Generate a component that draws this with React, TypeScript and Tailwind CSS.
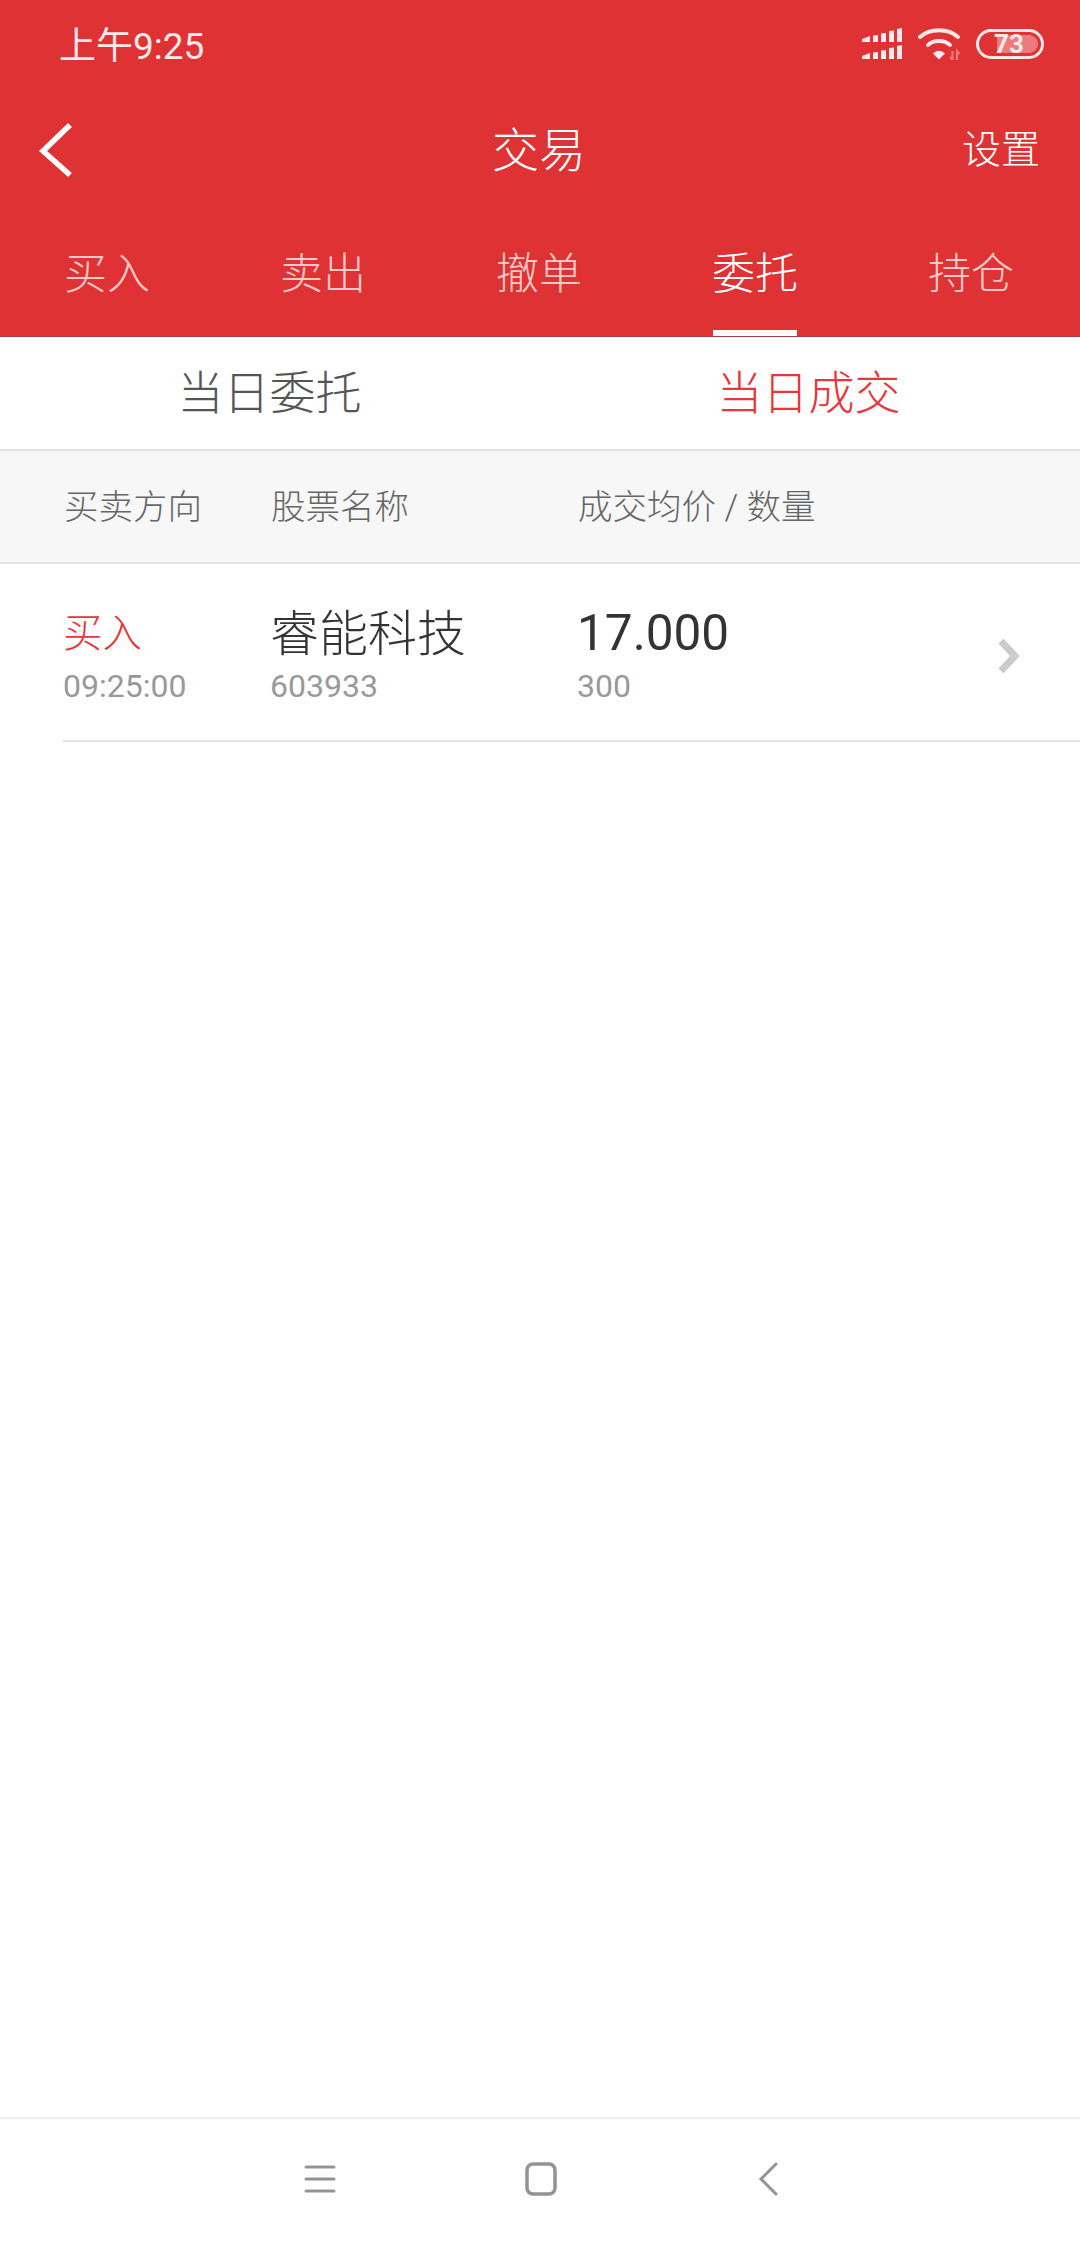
const font = "font-['Roboto','Noto_Sans_CJK_SC',sans-serif]";

const tabs = ["买入", "卖出", "撤单", "委托", "持仓"];

function SignalBars() {
  const row = "M0 11l8-3v6H0zM11 7.500l5-.5v7h-5zM19 5.500l5-.5v9h-5zM27 3l5-.5V14h-5zM35 1l5-1v14h-5z";
  return (
    <svg width="40" height="32" viewBox="0 0 40 32" fill="#fde9e9">
      <path d={row} />
      <path d={row} transform="translate(0 17)" />
    </svg>
  );
}

function WifiIcon() {
  return (
    <svg width="42" height="32" viewBox="0 0 42 32" fill="none">
      <g stroke="#fde9e9" strokeWidth="4" strokeLinecap="round">
        <path d="M2 9C12 0 30 0 40 9" />
        <path d="M10 17C15 11.500 27 11.500 32 17" />
      </g>
      <path d="M16 25.500C19 23 23 23 26 25.500L21 30.500Z" fill="#fde9e9" stroke="#fde9e9" strokeWidth="1.500" strokeLinejoin="round" />
      <path d="M34.500 23v9M34.500 32l-2.500-3M39 32v-9l2.500 3" stroke="#ee7b7b" strokeWidth="2" />
    </svg>
  );
}

function Battery() {
  return (
    <div className="relative flex h-[30px] w-[68px] items-center rounded-full border-[3px] border-[#fde9e9] p-[3px]">
      <div className="ml-[15px] h-full w-[42px] rounded-r-[9px] bg-[#ee7b7b]" />
      <span className="absolute inset-0 flex items-center justify-center pr-[2px] text-[26px] font-bold leading-none text-[#fde9e9]">
        73
      </span>
    </div>
  );
}

export default function App() {
  return (
    <div className={`${font} flex h-[2248px] w-[1080px] flex-col bg-white`}>
      {/* Red header */}
      <div className="h-[337px] shrink-0 bg-[#df3234]">
        <div className="flex h-[88px] items-center justify-between pl-[59px] pr-[36px]">
          <span className="pt-[4px] text-[37px] leading-none text-[#fde9e9]">上午9:25</span>
          <div className="flex items-center gap-[16px]">
            <SignalBars />
            <WifiIcon />
            <Battery />
          </div>
        </div>

        <div className="mt-[31px] flex h-[62px] items-center pl-[38px] pr-[40px]">
          <div className="flex-1">
            <svg width="36" height="58" viewBox="0 0 36 58" fill="none">
              <path d="M32 4L5 30L32 54" stroke="white" strokeWidth="5.500" />
            </svg>
          </div>
          <span className="text-[47px] font-light leading-none text-white">交易</span>
          <div className="flex-1 text-right text-[39px] font-light leading-none text-white">设置</div>
        </div>

        <div className="mt-[55px] flex h-[101px] border-b border-[#b23a3c]">
          {tabs.map((t) => (
            <div key={t} className="flex flex-1 flex-col items-center pr-[2px]">
              <div className={`flex h-[94px] items-start pt-[10px] text-[43px] font-light leading-[56px] ${t === "委托" ? "text-white" : "text-[#f9c9c9]"}`}>
                {t}
              </div>
              {t === "委托" && <div className="h-[6px] w-[84px] bg-white" />}
            </div>
          ))}
        </div>
      </div>

      {/* Sub tabs */}
      <div className="flex h-[112px] shrink-0 items-center bg-white pr-[2px] text-[46px] font-light leading-none">
        <div className="w-[539px] text-center text-[#555555]">当日委托</div>
        <div className="w-[539px] text-center text-[#e8363a]">当日成交</div>
      </div>

      {/* Column titles */}
      <div className="flex h-[115px] shrink-0 items-center border-y-2 border-[#e3e3e3] bg-[#f7f7f7] pl-[64px] pt-[2px] text-[34.500px] font-light leading-none text-[#666666]">
        <div className="w-[207px]">买卖方向</div>
        <div className="w-[307px]">股票名称</div>
        <div>成交均价 / 数量</div>
      </div>

      {/* Trade row */}
      <div className="ml-[63px] flex h-[178px] shrink-0 border-b-2 border-[#e3e3e3] pt-[44px]">
        <div className="w-[207px]">
          <div className="flex h-[52px] items-center text-[39.500px] font-light leading-none text-[#e8363a]">买入</div>
          <div className="mt-[10px] text-[32px] leading-none text-[#999999]">09:25:00</div>
        </div>
        <div className="w-[307px]">
          <div className="flex h-[52px] items-center text-[49px] font-light leading-none text-[#333333]">睿能科技</div>
          <div className="mt-[10px] text-[32px] leading-none text-[#999999]">603933</div>
        </div>
        <div className="w-[421px]">
          <div className="flex h-[52px] items-center text-[49.500px] leading-none text-[#333333]">17.000</div>
          <div className="mt-[10px] text-[32px] leading-none text-[#999999]">300</div>
        </div>
        <svg className="mt-[31px]" width="22" height="34" viewBox="0 0 22 34" fill="none">
          <path d="M3 2L17 17L3 32" stroke="#cccccc" strokeWidth="7" />
        </svg>
      </div>

      <div className="flex-1" />

      {/* Navigation bar */}
      <div className="flex h-[131px] shrink-0 items-center border-t-2 border-[#eeeeee] bg-white pb-[10px]">
        <div className="flex items-center pl-[208px]">
          <div className="flex w-[224px] justify-center">
            <svg width="32" height="30" viewBox="0 0 32 30" stroke="#939393" strokeWidth="3" strokeLinecap="round">
              <path d="M2 3H30M2 15H30M2 27H30" />
            </svg>
          </div>
          <div className="flex w-[224px] justify-center pr-[6px]">
            <svg width="32" height="34" viewBox="0 0 32 34" fill="none" stroke="#939393" strokeWidth="3.500">
              <rect x="2" y="2" width="28" height="30" rx="6" />
            </svg>
          </div>
          <div className="flex w-[224px] justify-center">
            <svg width="20" height="34" viewBox="0 0 20 34" fill="none" stroke="#939393" strokeWidth="3" strokeLinecap="round">
              <path d="M18 2L3 17L18 32" />
            </svg>
          </div>
        </div>
      </div>
    </div>
  );
}
